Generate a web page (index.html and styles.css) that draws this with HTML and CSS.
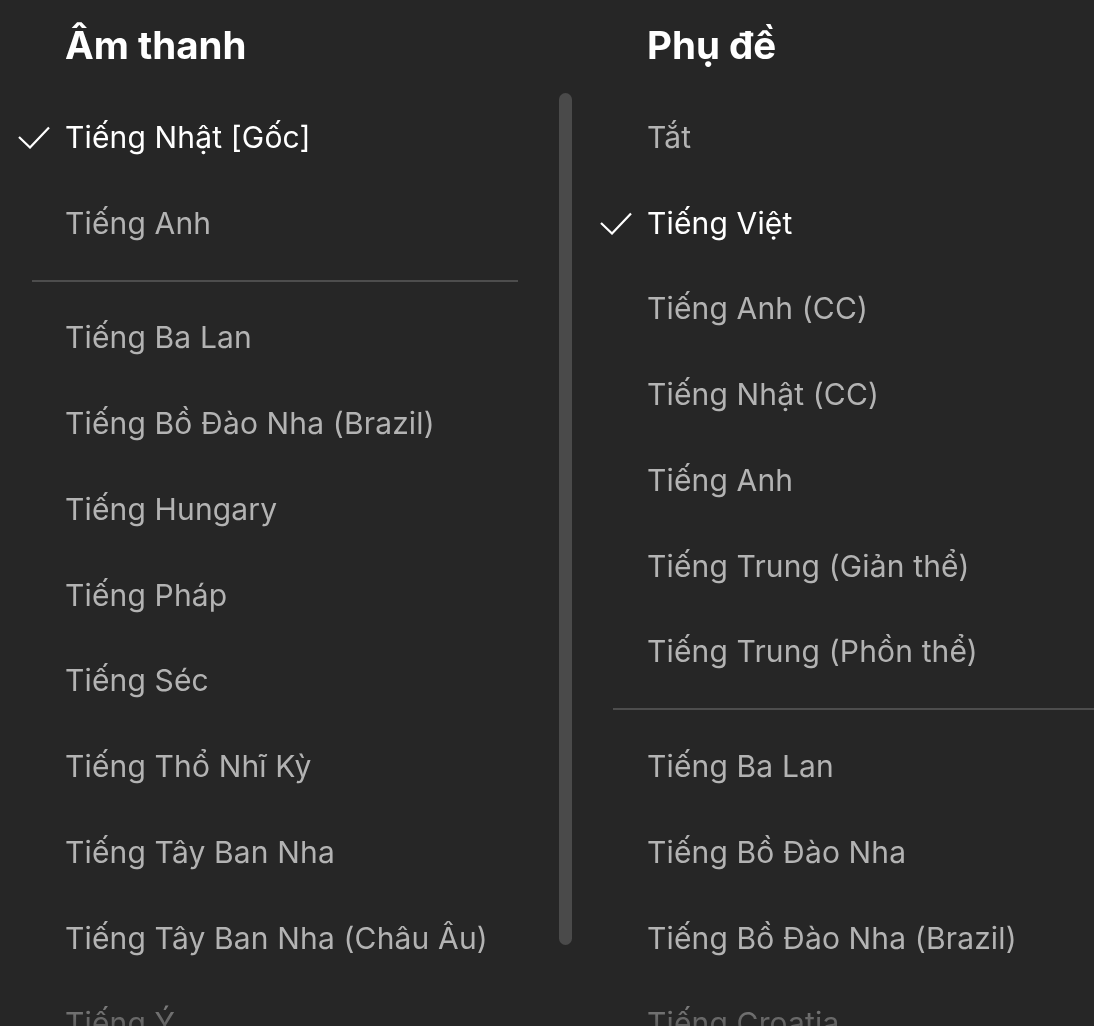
FILE: index.html
```html
<!DOCTYPE html>
<html lang="vi">
<head>
<meta charset="utf-8">
<title>Âm thanh và phụ đề</title>
<link rel="stylesheet" href="styles.css">
</head>
<body>
<div class="panel">
  <section class="col col-audio">
    <h2 class="heading">Âm thanh</h2>
    <ul class="list">
      <li class="item selected"><span class="check"><svg viewBox="0 0 34 24" width="34" height="24"><polyline points="1,12 12,22.5 31,2.5" fill="none" stroke="#fff" stroke-width="2.2"/></svg></span><span class="label">Tiếng Nhật [Gốc]</span></li>
      <li class="item"><span class="check"></span><span class="label">Tiếng Anh</span></li>
      <li class="divider"></li>
      <li class="item"><span class="check"></span><span class="label">Tiếng Ba Lan</span></li>
      <li class="item"><span class="check"></span><span class="label">Tiếng Bồ Đào Nha (Brazil)</span></li>
      <li class="item"><span class="check"></span><span class="label">Tiếng Hungary</span></li>
      <li class="item"><span class="check"></span><span class="label">Tiếng Pháp</span></li>
      <li class="item"><span class="check"></span><span class="label">Tiếng Séc</span></li>
      <li class="item"><span class="check"></span><span class="label">Tiếng Thổ Nhĩ Kỳ</span></li>
      <li class="item"><span class="check"></span><span class="label">Tiếng Tây Ban Nha</span></li>
      <li class="item"><span class="check"></span><span class="label">Tiếng Tây Ban Nha (Châu Âu)</span></li>
      <li class="item"><span class="check"></span><span class="label">Tiếng Ý</span></li>
    </ul>
  </section>
  <div class="scrollbar"></div>
  <section class="col col-subs">
    <h2 class="heading">Phụ đề</h2>
    <ul class="list">
      <li class="item"><span class="check"></span><span class="label">Tắt</span></li>
      <li class="item selected"><span class="check"><svg viewBox="0 0 34 24" width="34" height="24"><polyline points="1,12 12,22.5 31,2.5" fill="none" stroke="#fff" stroke-width="2.2"/></svg></span><span class="label">Tiếng Việt</span></li>
      <li class="item"><span class="check"></span><span class="label">Tiếng Anh (CC)</span></li>
      <li class="item"><span class="check"></span><span class="label">Tiếng Nhật (CC)</span></li>
      <li class="item"><span class="check"></span><span class="label">Tiếng Anh</span></li>
      <li class="item"><span class="check"></span><span class="label">Tiếng Trung (Giản thể)</span></li>
      <li class="item"><span class="check"></span><span class="label">Tiếng Trung (Phồn thể)</span></li>
      <li class="divider"></li>
      <li class="item"><span class="check"></span><span class="label">Tiếng Ba Lan</span></li>
      <li class="item"><span class="check"></span><span class="label">Tiếng Bồ Đào Nha</span></li>
      <li class="item"><span class="check"></span><span class="label">Tiếng Bồ Đào Nha (Brazil)</span></li>
      <li class="item"><span class="check"></span><span class="label">Tiếng Croatia</span></li>
    </ul>
  </section>
</div>
</body>
</html>
```

FILE: styles.css
```css
html, body {
  margin: 0;
  padding: 0;
  background: #262626;
  height: 100%;
  overflow: hidden;
}

body {
  font-family: Inter, "Noto Sans", "Liberation Sans", sans-serif;
  color: #b3b3b3;
}

.panel {
  display: flex;
  align-items: flex-start;
  height: 1026px;
  overflow: hidden;
  -webkit-mask-image: linear-gradient(to bottom, #000 970px, transparent 1062px);
  mask-image: linear-gradient(to bottom, #000 970px, transparent 1062px);
}

.col {
  flex: none;
}

.col-audio {
  width: 550px;
}

.col-subs {
  flex: 1;
  min-width: 0;
}

.heading {
  margin: 0;
  padding: 22px 0 0 65px;
  height: 46px;
  line-height: 46px;
  margin-bottom: 26px;
  font-size: 38.5px;
  font-weight: 700;
  color: #fff;
  letter-spacing: 0;
  white-space: nowrap;
}

.list {
  list-style: none;
  margin: 0;
  padding: 0;
}

.item {
  display: flex;
  align-items: center;
  height: 85.75px;
  white-space: nowrap;
}

.check {
  flex: none;
  width: 34px;
  height: 24px;
  margin-left: 18px;
  margin-right: 13px;
  display: flex;
  align-items: center;
}

.check svg {
  display: block;
}

.label {
  font-size: 30px;
  line-height: 1;
  letter-spacing: 0.15px;
  color: #b3b3b3;
}

.selected .label {
  color: #fff;
}

.divider {
  height: 2px;
  margin: 14px 32px 13px 32px;
  background: #4d4d4d;
}

.col-subs .divider {
  margin-left: 31px;
  margin-right: 0;
}

.scrollbar {
  flex: none;
  width: 13px;
  height: 852px;
  margin: 93px 10px 0 9px;
  border-radius: 7px;
  background: #4a4a4a;
}
```
